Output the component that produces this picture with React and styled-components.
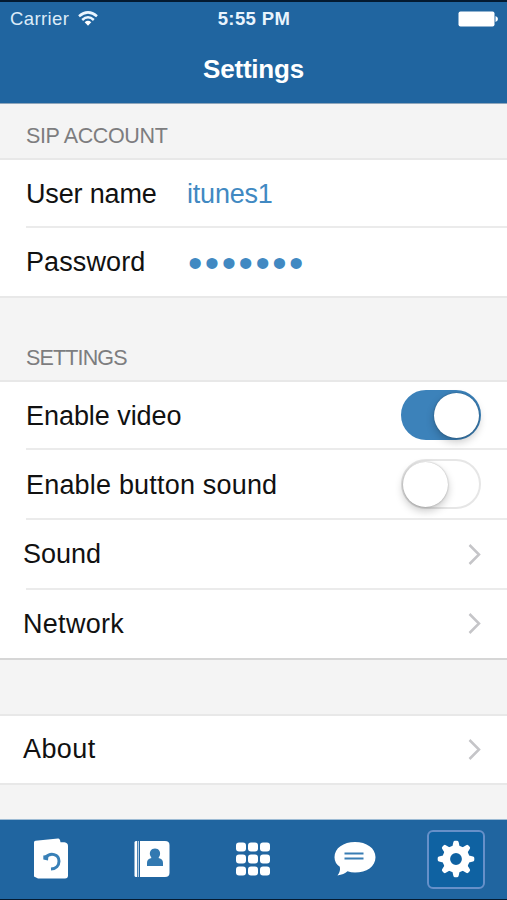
import React, { useState } from 'react';
import styled, { createGlobalStyle } from 'styled-components';

const GlobalStyle = createGlobalStyle`
	* {
		box-sizing: border-box;
	}

	body {
		margin: 0;
		font-family: 'Liberation Sans', Arial, sans-serif;
		background: #f4f4f4;
	}
`;

const Screen = styled.div`
	display: flex;
	flex-direction: column;
	width: 507px;
	height: 900px;
	overflow: hidden;
	background: #f4f4f4;
`;

const Header = styled.header`
	height: 104px;
	background: #2065a0;
	border-top: 2px solid #041a30;
	border-bottom: 1px solid #8fa6bb;
	color: #fff;
`;

const StatusBar = styled.div`
	display: grid;
	grid-template-columns: 1fr auto 1fr;
	align-items: center;
	height: 33px;
	padding: 0 9px 0 10px;
`;

const Carrier = styled.div`
	display: flex;
	align-items: center;
	gap: 9px;
	font-size: 18.5px;
	letter-spacing: 0.4px;
	color: #dcebf8;
`;

const Time = styled.div`
	font-size: 18.5px;
	line-height: 22px;
	font-weight: bold;
	letter-spacing: 0.4px;
	color: #e9f4fd;
`;

const BatteryIcon = styled.svg`
	justify-self: end;
`;

const Title = styled.h1`
	margin: 0;
	font-size: 26px;
	line-height: 68px;
	font-weight: bold;
	letter-spacing: -0.2px;
	text-align: center;
`;

const SectionTitle = styled.h2`
	display: flex;
	align-items: flex-end;
	height: ${({ $height }) => $height}px;
	margin: 0;
	padding: 0 26px 10px;
	font-size: 21.5px;
	line-height: 24px;
	font-weight: normal;
	letter-spacing: ${({ $spacing }) => $spacing || 0}px;
	color: #7d7d7f;
`;

const Group = styled.section`
	background: #fff;
	border-top: 2px solid #e8e8e8;
	border-bottom: 2px solid ${({ $edge }) => $edge || '#e8e8e8'};
`;

const Row = styled.div`
	display: flex;
	align-items: center;
	height: ${({ $height }) => $height || 68}px;
	padding: 0 26px 2px ${({ $link }) => ($link ? 23 : 26)}px;
	background: linear-gradient(#ebebeb, #ebebeb) 26px 100% / 100% 2px no-repeat;

	&:last-child {
		padding-bottom: 1px;
		background: none;
	}
`;

const Label = styled.span`
	flex: ${({ $width }) => ($width ? `0 0 ${$width}px` : 1)};
	padding-top: ${({ $top }) => $top || 1}px;
	font-size: 27px;
	letter-spacing: ${({ $spacing }) => $spacing || 0}px;
	white-space: nowrap;
	color: #111;
`;

const Value = styled.span`
	padding-top: 2px;
	font-size: 27px;
	letter-spacing: -0.2px;
	color: #4189c2;
`;

const Password = styled(Value)`
	padding: 2px 0 0 1px;
	font-size: 41px;
	line-height: 40px;
	letter-spacing: 2.5px;
`;

const Track = styled.button`
	display: flex;
	justify-content: ${({ $on }) => ($on ? 'flex-end' : 'flex-start')};
	align-items: center;
	width: 80px;
	height: 50px;
	padding: 0;
	border: 2px solid ${({ $on }) => ($on ? '#3c82ba' : '#e6e6e6')};
	border-radius: 25px;
	background: ${({ $on }) => ($on ? '#3c82ba' : '#fff')};
`;

const Knob = styled.span`
	width: 45px;
	height: 45px;
	border-radius: 50%;
	background: #fff;
	box-shadow: 0 4px 8px rgba(0, 0, 0, 0.22), 0 0 2px rgba(0, 0, 0, 0.3);
`;

const Spacer = styled.div`
	height: 54px;
`;

const TabBar = styled.nav`
	display: grid;
	grid-template-columns: repeat(5, 1fr);
	height: 81px;
	margin-top: auto;
	background: #2065a0;
	border-top: 1px solid #9dbbd4;
	border-bottom: 1px solid #041a30;
`;

const Tab = styled.button`
	display: flex;
	align-items: center;
	justify-content: center;
	width: 58px;
	height: 59px;
	margin: 10px auto 0;
	padding: 0 0 2px;
	border: 2px solid ${({ $active }) => ($active ? '#6690c9' : 'transparent')};
	border-radius: 6px;
	background: ${({ $active }) => ($active ? '#0f62a2' : 'none')};
`;

const WifiIcon = () => (
	<svg width='20' height='15' viewBox='0 0 20 15' fill='none' stroke='#eaf5ff' strokeWidth='2.5'>
		<path d='M1 5.2Q10-2.5 19 5.2' />
		<path d='M4.2 9Q10 3.6 15.8 9' />
		<path d='M10 14.8L6.7 11.2Q10 8.3 13.3 11.2Z' fill='#fff' stroke='none' />
	</svg>
);

const Chevron = () => (
	<svg width='13' height='21' viewBox='0 0 13 21' fill='none' stroke='#c5c5c8' strokeWidth='2.5'>
		<path d='M1.5 1L11 10.5L1.5 20' />
	</svg>
);

const HistoryIcon = () => (
	<svg width='36' height='42' viewBox='0 0 36 42'>
		<path
			d='M1 4.5Q1 3 2.5 2.8L25 .6Q27 .4 27.5 4.2L31.5 4.3Q35 5 35 8V37.5Q35 40.5 32 40.5H5L1 38.5Z'
			fill='#fff'
		/>
		<path d='M12.5 19.5C17.5 14 26 16 26 23.3C26 27.5 23 30.8 18 31' fill='none' stroke='#3980b7' strokeWidth='3' />
		<path d='M10.3 17.5L15.5 17L15 22.5L10.3 21.5Z' fill='#3980b7' />
	</svg>
);

const ContactsIcon = () => (
	<svg width='36' height='38' viewBox='0 0 36 38'>
		<path d='M2 1H3V37H2Q.5 37 .5 35.5V2.5Q.5 1 2 1Z' fill='#fff' />
		<path d='M3.7 1H5V37H3.7Z' fill='#b5cde3' />
		<path d='M6 1H31Q35.5 1 35.5 5V33Q35.5 37 31 37H6Z' fill='#fff' />
		<path
			d='M21 8.5C25 8.5 27 12 25.8 15.5L24.5 18C27.8 18.8 29 20.5 29 23V26H13V23C13 20.5 14.2 18.8 17.5 18L16.2 15.5C15 12 17 8.5 21 8.5Z'
			fill='#3279b1'
		/>
	</svg>
);

const KeypadIcon = () => (
	<svg width='36' height='36' viewBox='0 0 36 36' fill='#fff'>
		{[1.5, 13.5, 25.5].map((y) => [1, 13, 25].map((x) => <rect key={`${x}-${y}`} x={x} y={y} width='10' height='9' rx='3' />))}
	</svg>
);

const ChatIcon = () => (
	<svg width='42' height='36' viewBox='0 0 42 36'>
		<path
			d='M21 1C32.5 1 41.5 7 41.5 16.2C41.5 25.5 32.5 31.5 21 31.5Q17 31.5 13.5 30.3Q10 33.5 3.5 34.5Q6.8 30.5 5.8 25.8Q.5 22 .5 16.2C.5 7 9.5 1 21 1Z'
			fill='#fff'
		/>
		<path d='M10.5 12.5H29.5M10.5 17.5H29.5' stroke='#397db4' strokeWidth='2.2' />
	</svg>
);

const GearIcon = () => (
	<svg width='38' height='38' viewBox='-19 -19 38 38' fill='#fff'>
		{[0, 45, 90, 135, 180, 225, 270, 315].map((angle) => (
			<path key={angle} d='M-6-11L-3.5-13L-2.6-17Q-2.2-18.3-1-18.3H1Q2.2-18.3 2.6-17L3.5-13L6-11Z' transform={`rotate(${angle})`} />
		))}
		<circle r='9.7' fill='none' stroke='#fff' strokeWidth='7.6' />
	</svg>
);

const tabs = [
	{ id: 'history', label: 'History', Icon: HistoryIcon },
	{ id: 'contacts', label: 'Contacts', Icon: ContactsIcon },
	{ id: 'keypad', label: 'Keypad', Icon: KeypadIcon },
	{ id: 'messages', label: 'Messages', Icon: ChatIcon },
	{ id: 'settings', label: 'Settings', Icon: GearIcon },
];

const Switch = ({ on, onToggle, label }) => (
	<Track $on={on} role='switch' aria-checked={on} aria-label={label} onClick={onToggle}>
		<Knob />
	</Track>
);

export default function App() {
	const [video, setVideo] = useState(true);
	const [buttonSound, setButtonSound] = useState(false);
	const [activeTab, setActiveTab] = useState('settings');

	return (
		<>
			<GlobalStyle />
			<Screen>
				<Header>
					<StatusBar>
						<Carrier>
							Carrier
							<WifiIcon />
						</Carrier>
						<Time>5:55 PM</Time>
						<BatteryIcon width='40' height='16' viewBox='0 0 40 16' fill='#fff'>
							<rect x='.5' y='.5' width='36' height='15' rx='2' />
							<path d='M37.5 5Q40 6 40 8T37.5 11Z' />
						</BatteryIcon>
					</StatusBar>
					<Title>Settings</Title>
				</Header>

				<SectionTitle $height={54} $spacing={-0.35}>
					SIP ACCOUNT
				</SectionTitle>
				<Group>
					<Row>
						<Label $width={161} $top={2} $spacing={-0.15}>
							User name
						</Label>
						<Value>itunes1</Value>
					</Row>
					<Row>
						<Label $width={161} $top={2} $spacing={0.1}>
							Password
						</Label>
						<Password>•••••••</Password>
					</Row>
				</Group>

				<SectionTitle $height={82} $spacing={-0.85}>
					SETTINGS
				</SectionTitle>
				<Group $edge='#d6d6d6'>
					<Row>
						<Label $top={2} $spacing={-0.05}>
							Enable video
						</Label>
						<Switch on={video} label='Enable video' onToggle={() => setVideo(!video)} />
					</Row>
					<Row $height={70}>
						<Label $top={3} $spacing={0.19}>
							Enable button sound
						</Label>
						<Switch on={buttonSound} label='Enable button sound' onToggle={() => setButtonSound(!buttonSound)} />
					</Row>
					<Row $link $height={70}>
						<Label>Sound</Label>
						<Chevron />
					</Row>
					<Row $link>
						<Label $spacing={0.3}>Network</Label>
						<Chevron />
					</Row>
				</Group>

				<Spacer />
				<Group>
					<Row $link $height={67}>
						<Label $spacing={0.4}>About</Label>
						<Chevron />
					</Row>
				</Group>

				<TabBar>
					{tabs.map(({ id, label, Icon }) => (
						<Tab key={id} aria-label={label} $active={activeTab === id} onClick={() => setActiveTab(id)}>
							<Icon />
						</Tab>
					))}
				</TabBar>
			</Screen>
		</>
	);
}
